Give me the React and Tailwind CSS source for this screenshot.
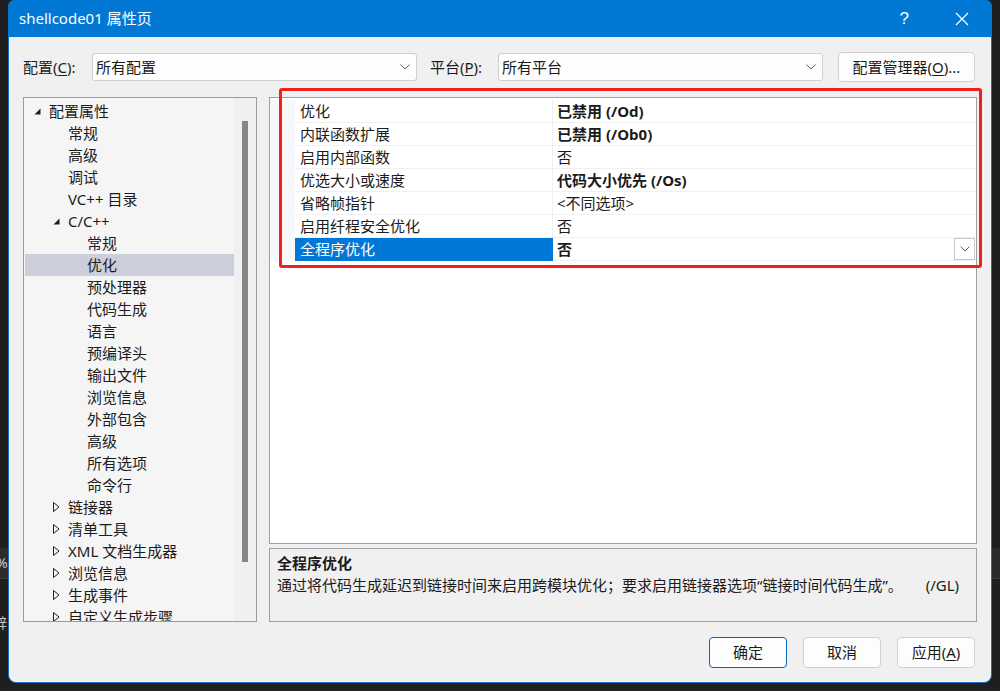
import React from "react";

const tree = [
  { t: "配置属性", l: 0, a: "open" },
  { t: "常规", l: 1 },
  { t: "高级", l: 1 },
  { t: "调试", l: 1 },
  { t: "VC++ 目录", l: 1 },
  { t: "C/C++", l: 1, a: "open" },
  { t: "常规", l: 2 },
  { t: "优化", l: 2, sel: true },
  { t: "预处理器", l: 2 },
  { t: "代码生成", l: 2 },
  { t: "语言", l: 2 },
  { t: "预编译头", l: 2 },
  { t: "输出文件", l: 2 },
  { t: "浏览信息", l: 2 },
  { t: "外部包含", l: 2 },
  { t: "高级", l: 2 },
  { t: "所有选项", l: 2 },
  { t: "命令行", l: 2 },
  { t: "链接器", l: 1, a: "closed" },
  { t: "清单工具", l: 1, a: "closed" },
  { t: "XML 文档生成器", l: 1, a: "closed" },
  { t: "浏览信息", l: 1, a: "closed" },
  { t: "生成事件", l: 1, a: "closed" },
  { t: "自定义生成步骤", l: 1, a: "closed" },
];

const indent = { 0: "pl-[9px]", 1: "pl-[28px]", 2: "pl-[47px]" };

const props = [
  { name: "优化", value: "已禁用 (/Od)", bold: true },
  { name: "内联函数扩展", value: "已禁用 (/Ob0)", bold: true },
  { name: "启用内部函数", value: "否" },
  { name: "优选大小或速度", value: "代码大小优先 (/Os)", bold: true },
  { name: "省略帧指针", value: "<不同选项>" },
  { name: "启用纤程安全优化", value: "否" },
  { name: "全程序优化", value: "否", bold: true, sel: true },
];

const Chevron = ({ className = "" }) => (
  <svg width="10" height="6" viewBox="0 0 10 6" className={className}>
    <path d="M0.5 0.5 L5 5 L9.5 0.5" fill="none" stroke="#606060" strokeWidth="1" />
  </svg>
);

const Arrow = ({ kind }) => {
  if (kind === "open")
    return (
      <svg width="7" height="7" viewBox="0 0 7 7">
        <path d="M6.5 0.5 L6.5 6.5 L0.5 6.5 Z" fill="#1e1e1e" />
      </svg>
    );
  if (kind === "closed")
    return (
      <svg width="7" height="10" viewBox="0 0 7 10">
        <path d="M0.5 0.5 L6 5 L0.5 9.5 Z" fill="none" stroke="#1e1e1e" strokeWidth="1" />
      </svg>
    );
  return null;
};

const Select = ({ text }) => (
  <div className="w-[325px] h-[28px] bg-[#fdfdfd] border border-[#d0d0d0] rounded-[3px] flex items-center justify-between pl-[3px] pr-[6px]">
    <span>{text}</span>
    <Chevron />
  </div>
);

export default function App() {
  return (
    <div className="relative w-[1000px] h-[691px] bg-[#1f1f1f] overflow-hidden text-[15px] text-[#1b1b1b] font-['Noto_Sans','Noto_Sans_CJK_SC',sans-serif]">
      {/* editor bits peeking out behind the dialog */}
      <div className="absolute left-0 top-[548px] w-[8px] h-[31px] bg-[#2c2c2c] border-b border-[#3e3e3e] text-[#d0d0d0] text-[14px] leading-[30px] overflow-hidden">
        <span className="ml-[-4px]">%</span>
      </div>
      <div className="absolute left-0 top-[612px] w-[8px] h-[22px] text-[#c8c8c8] text-[14px] leading-[22px] overflow-hidden">
        <span className="ml-[-7px]">辞</span>
      </div>
      <div className="absolute right-0 top-[548px] w-[8px] h-[31px] bg-[#2b2b2b] border-b border-[#3a3a3a]" />

      <div className="relative ml-[8px] w-[984px] h-[683px] flex flex-col">
        {/* title bar */}
        <div className="h-[37px] bg-[#0078d4] rounded-tl-[6px] rounded-tr-[6px] flex items-center pl-[11px] text-white">
          <span className="leading-none">shellcode01 属性页</span>
          <span className="ml-auto mr-[46px] text-[17px] leading-none font-['Liberation_Sans',sans-serif] font-light">?</span>
          <svg width="14" height="14" viewBox="0 0 14 14" className="mr-[23px]">
            <path d="M1 1 L13 13 M13 1 L1 13" stroke="white" strokeWidth="1.2" />
          </svg>
        </div>

        {/* body */}
        <div className="flex-1 bg-[#f0f0f0] border-x border-b border-[#1c6fc0] rounded-b-[8px] px-[14px] pt-[15px] flex flex-col">
          {/* config row */}
          <div className="h-[30px] flex items-center">
            <span className="w-[69px]">
              配置(<span className="underline underline-offset-2">C</span>):
            </span>
            <Select text="所有配置" />
            <span className="ml-[13px] w-[68px]">
              平台(<span className="underline underline-offset-2">P</span>):
            </span>
            <Select text="所有平台" />
            <div className="ml-[15px] w-[137px] h-[30px] bg-[#fdfdfd] border border-[#d0d0d0] rounded-[4px] flex items-center justify-center">
              配置管理器(<span className="underline underline-offset-2">O</span>)...
            </div>
          </div>

          {/* main area */}
          <div className="mt-[15px] h-[525px] flex gap-[12px]">
            {/* tree */}
            <div className="w-[234px] border border-[#9c9c9c] bg-[#f5f5f5] flex overflow-hidden">
              <div className="flex-1 pl-[1px] pt-[2px] overflow-hidden">
                {tree.map((n, i) => (
                  <div
                    key={i}
                    className={`h-[22px] flex items-center whitespace-nowrap ${indent[n.l]} ${n.sel ? "bg-[#cccedb]" : ""}`}
                  >
                    <span className="w-[15px] flex items-center">
                      <Arrow kind={n.a} />
                    </span>
                    <span className="leading-[22px]">{n.t}</span>
                  </div>
                ))}
              </div>
              <div className="w-[22px] bg-[#f0f0f0] flex justify-center pt-[23px]">
                <div className="w-[6px] h-[441px] bg-[#868686]" />
              </div>
            </div>

            {/* property grid + description */}
            <div className="w-[708px] flex flex-col gap-[4px]">
              <div className="relative flex-1 border border-[#a0a0a0] bg-white pt-[2px]">
                {props.map((p, i) => (
                  <div key={i} className="h-[23px] flex">
                    <div className="w-[25px] bg-[#f6f8fb]" />
                    <div
                      className={`w-[258px] pl-[5px] flex items-center border-r border-b ${
                        p.sel ? "bg-[#0078d7] text-white border-[#0078d7]" : "border-[#f0f0f0]"
                      }`}
                    >
                      {p.name}
                    </div>
                    <div className="flex-1 pl-[4px] flex items-center border-b border-[#f0f0f0]">
                      <span className={p.bold ? "font-bold" : ""}>{p.value}</span>
                      {p.sel && (
                        <div className="ml-auto mr-[1px] w-[21px] h-[22px] border border-[#c8c8c8] bg-white flex items-center justify-center">
                          <Chevron />
                        </div>
                      )}
                    </div>
                  </div>
                ))}
                {/* red annotation box */}
                <div className="absolute left-[9px] top-[-10px] w-[703px] h-[180px] border-[3px] border-[#f2201c] rounded-[3px]" />
              </div>
              <div className="h-[74px] border border-[#a0a0a0] bg-[#f0f0f0] px-[7px] pt-[3px]">
                <div className="font-bold leading-[22px]">全程序优化</div>
                <div className="flex leading-[22px]">
                  <span>通过将代码生成延迟到链接时间来启用跨模块优化；要求启用链接器选项“链接时间代码生成”。</span>
                  <span className="ml-auto mr-[10px]">(/GL)</span>
                </div>
              </div>
            </div>
          </div>

          {/* dialog buttons */}
          <div className="mt-[15px] flex justify-end gap-[16px] pr-[2px]">
            <div className="w-[78px] h-[31px] bg-[#fdfdfd] border border-[#0067c0] rounded-[4px] flex items-center justify-center">
              确定
            </div>
            <div className="w-[78px] h-[31px] bg-[#fdfdfd] border border-[#d0d0d0] rounded-[4px] flex items-center justify-center">
              取消
            </div>
            <div className="w-[78px] h-[31px] bg-[#fdfdfd] border border-[#d0d0d0] rounded-[4px] flex items-center justify-center">
              应用(<span className="underline underline-offset-2">A</span>)
            </div>
          </div>
        </div>
      </div>
    </div>
  );
}
